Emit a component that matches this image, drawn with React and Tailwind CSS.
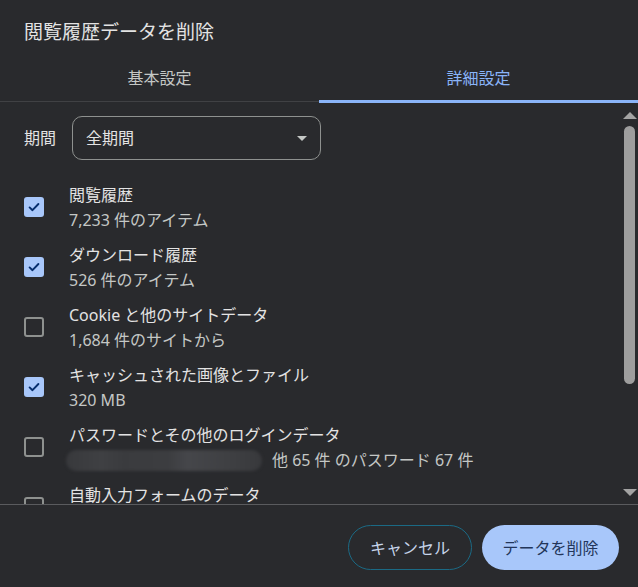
import React from 'react';

const items = [
  { checked: true, title: '閲覧履歴', sub: '7,233 件のアイテム' },
  { checked: true, title: 'ダウンロード履歴', sub: '526 件のアイテム' },
  { checked: false, title: 'Cookie と他のサイトデータ', sub: '1,684 件のサイトから' },
  { checked: true, title: 'キャッシュされた画像とファイル', sub: '320 MB' },
  { checked: false, title: 'パスワードとその他のログインデータ', sub: '他 65 件 のパスワード 67 件', redacted: true },
  { checked: false, title: '自動入力フォームのデータ', sub: null },
];

const Checkbox = ({ checked }) =>
  checked ? (
    <div className="w-[20px] h-[20px] shrink-0 rounded-[3px] bg-[#a8c7fa] flex items-center justify-center">
      <svg width="14" height="14" viewBox="0 0 14 14" fill="none">
        <path d="M2.6 7.4l2.9 2.8L11.4 4" stroke="#062e6f" strokeWidth="1.9" strokeLinecap="round" strokeLinejoin="round" />
      </svg>
    </div>
  ) : (
    <div className="w-[20px] h-[20px] shrink-0 rounded-[3px] border-2 border-[#8e918f]" />
  );

const App = () => {
  return (
    <div className="w-[638px] h-[587px] bg-[#292a2d] overflow-hidden flex flex-col font-['Noto_Sans','Noto_Sans_CJK_JP',sans-serif] text-[#e3e3e3]">
      {/* Title */}
      <div className="h-[56px] shrink-0 pl-[24px] pt-[19px]">
        <h1 className="text-[19px] leading-[26px] font-normal">閲覧履歴データを削除</h1>
      </div>

      {/* Tabs */}
      <div className="h-[47px] shrink-0 flex">
        <div className="w-1/2 flex flex-col">
          <div className="flex-1 flex items-center justify-center text-[16px] text-[#c4c7c5]">基本設定</div>
          <div className="h-[3px] flex flex-col justify-center">
            <div className="h-px bg-[#404144]" />
          </div>
        </div>
        <div className="w-1/2 flex flex-col">
          <div className="flex-1 flex items-center justify-center text-[16px] text-[#8ab4f8]">詳細設定</div>
          <div className="h-[3px] bg-[#8ab4f8]" />
        </div>
      </div>

      {/* Scrollable content */}
      <div className="h-[401px] shrink-0 flex overflow-hidden">
        <div className="flex-1 pl-[24px] pt-[13px] overflow-hidden">
          <div className="flex items-center h-[44px]">
            <span className="w-[48px] text-[16px] text-[#e3e3e3]">期間</span>
            <div className="w-[249px] h-[44px] rounded-[10px] border border-[#8e918f] flex items-center justify-between pl-[13px] pr-[13px]">
              <span className="text-[16px] text-[#e3e3e3]">全期間</span>
              <svg width="10" height="5" viewBox="0 0 10 5">
                <polygon points="0,0 10,0 5,5" fill="#c4c7c5" />
              </svg>
            </div>
          </div>

          <div className="mt-[17px] flex flex-col">
            {items.map((item, i) => (
              <div key={i} className="h-[60px] shrink-0 flex items-center gap-[25px]">
                <Checkbox checked={item.checked} />
                <div className="flex flex-col pt-[2px] text-[16px] leading-[25px]">
                  <span className="text-[#e3e3e3]">{item.title}</span>
                  {item.redacted ? (
                    <div className="flex items-center">
                      <div className="w-[196px] h-[21px] -ml-[3px] mr-[10px] rounded-full blur-[1.5px] bg-[linear-gradient(90deg,#38393c_0%,#3f4043_18%,#3a3b3e_30%,#3c3d40_52%,#45464a_62%,#3e3f42_85%,#38393c_100%)]" />
                      <span className="text-[#c4c7c5]">{item.sub}</span>
                    </div>
                  ) : item.sub ? (
                    <span className="text-[#c4c7c5]">{item.sub}</span>
                  ) : (
                    <span className="h-[25px]" />
                  )}
                </div>
              </div>
            ))}
          </div>
        </div>

        {/* Scrollbar */}
        <div className="w-[17px] shrink-0 flex flex-col items-center pt-[9px] pb-[8px]">
          <svg width="14" height="7" viewBox="0 0 14 7">
            <polygon points="7,0 14,7 0,7" fill="#a3a3a3" />
          </svg>
          <div className="mt-[7px] w-[11px] h-[258px] rounded-full bg-[#9e9e9e]" />
          <div className="flex-1" />
          <svg width="14" height="7" viewBox="0 0 14 7">
            <polygon points="0,0 14,0 7,7" fill="#a3a3a3" />
          </svg>
        </div>
      </div>

      <div className="h-px shrink-0 bg-[#5a5b5e]" />

      {/* Footer */}
      <div className="flex-1 flex justify-end items-start pt-[20px] pr-[19px] gap-[10px]">
        <button className="w-[124px] h-[45px] rounded-full border border-[#1b6a85] text-[16px] text-[#c6d4ea]">
          キャンセル
        </button>
        <button className="w-[137px] h-[45px] rounded-full bg-[#a8c7fa] text-[16px] text-[#23365a]">
          データを削除
        </button>
      </div>
    </div>
  );
};

export default App;
